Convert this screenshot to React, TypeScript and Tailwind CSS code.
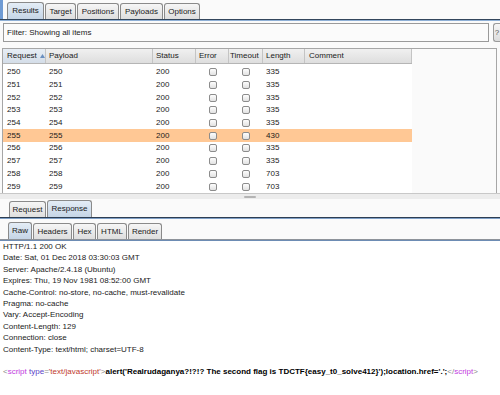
import React from "react";

const rows = [
  { id: 250, len: 335 },
  { id: 251, len: 335 },
  { id: 252, len: 335 },
  { id: 253, len: 335 },
  { id: 254, len: 335 },
  { id: 255, len: 430, hit: true },
  { id: 256, len: 335 },
  { id: 257, len: 335 },
  { id: 258, len: 703 },
  { id: 259, len: 703 },
];

const headers = [
  "HTTP/1.1 200 OK",
  "Date: Sat, 01 Dec 2018 03:30:03 GMT",
  "Server: Apache/2.4.18 (Ubuntu)",
  "Expires: Thu, 19 Nov 1981 08:52:00 GMT",
  "Cache-Control: no-store, no-cache, must-revalidate",
  "Pragma: no-cache",
  "Vary: Accept-Encoding",
  "Content-Length: 129",
  "Connection: close",
  "Content-Type: text/html; charset=UTF-8",
];

function Tab({ label, w, active }: { label: string; w: string; active?: boolean }) {
  return (
    <div
      className={`${w} flex items-center justify-center rounded-t-[3px] border border-b-0 border-[#8a8a8a] text-[8px] text-[#1a1a1a] ${
        active
          ? "h-[17px] bg-gradient-to-b from-[#e4edf6] to-[#c5d5e6]"
          : "h-[16px] bg-gradient-to-b from-[#f6f6f6] to-[#dedede]"
      }`}
    >
      {label}
    </div>
  );
}

function Check() {
  return (
    <div className="h-[8px] w-[8px] rounded-[2px] border border-[#8c8c8c] bg-gradient-to-b from-[#fdfdfd] to-[#e2e2e2]" />
  );
}

export default function App() {
  return (
    <div
      className="h-[395px] w-[500px] overflow-hidden bg-[#fafafa] text-[#1a1a1a]"
      style={{ fontFamily: '"Liberation Sans", Arial, sans-serif' }}
    >
      {/* top tab strip */}
      <div className="flex h-[19px] items-end">
        <div className="h-[19px] w-[3px] bg-[#6f9bd4]" />
        <div className="ml-[4px] flex items-end gap-[1px]">
          <Tab label="Results" w="w-[37px]" active />
          <Tab label="Target" w="w-[31px]" />
          <Tab label="Positions" w="w-[42px]" />
          <Tab label="Payloads" w="w-[43px]" />
          <Tab label="Options" w="w-[36px]" />
        </div>
      </div>
      <div className="h-[1px] bg-[#33465c]" />
      <div className="h-[1px] bg-[#8fb0d6]" />

      {/* filter */}
      <div className="mt-[2px] flex h-[19px] items-stretch">
        <div className="ml-[3px] flex w-[486px] items-center border border-[#9a9a9a] bg-[#fbfbfb] pl-[3px] text-[8px]">
          Filter: Showing all items
        </div>
        <div className="ml-[4px] flex flex-1 items-center justify-center rounded-l-[3px] border border-r-0 border-[#9a9a9a] bg-gradient-to-b from-[#f6f6f6] to-[#dcdcdc] text-[8px] text-[#555]">
          ?
        </div>
      </div>

      {/* results table */}
      <div className="ml-[2px] mt-[6px] h-[145px] w-[495px] border-x border-t border-[#a6a6a6] bg-[#fafafa]">
        <div className="w-[409px]">
          <div className="flex h-[15px] border-b border-[#b5b5b5] text-[8px] leading-[14px]">
            <div className="flex w-[43px] items-center gap-[3px] border-r border-[#c4c4c4] bg-gradient-to-b from-[#e8eef5] to-[#d4dde8] pl-[4px]">
              Request
              <svg width="5" height="4" viewBox="0 0 5 4">
                <path d="M2.5 0L5 4H0z" fill="#6a8fbf" />
              </svg>
            </div>
            <div className="w-[107px] border-r border-[#c4c4c4] bg-gradient-to-b from-[#f0f0f0] to-[#dedede] pl-[3px]">
              Payload
            </div>
            <div className="w-[43px] border-r border-[#c4c4c4] bg-gradient-to-b from-[#f0f0f0] to-[#dedede] pl-[3px]">
              Status
            </div>
            <div className="w-[33px] border-r border-[#c4c4c4] bg-gradient-to-b from-[#f0f0f0] to-[#dedede] pl-[3px]">
              Error
            </div>
            <div className="w-[34px] border-r border-[#c4c4c4] bg-gradient-to-b from-[#f0f0f0] to-[#dedede] pl-[1px]">
              Timeout
            </div>
            <div className="w-[42px] border-r border-[#c4c4c4] bg-gradient-to-b from-[#f0f0f0] to-[#dedede] pl-[3px]">
              Length
            </div>
            <div className="w-[107px] border-r border-[#c4c4c4] bg-gradient-to-b from-[#f0f0f0] to-[#dedede] pl-[4px]">
              Comment
            </div>
          </div>
          <div className="bg-white pt-[2px]">
            {rows.map((r) => (
              <div
                key={r.id}
                className={`flex h-[12.7px] items-center text-[8px] ${r.hit ? "bg-[#ffc895]" : ""}`}
              >
                <div className="w-[43px] pl-[4px]">{r.id}</div>
                <div className="w-[107px] pl-[3px]">{r.id}</div>
                <div className="w-[43px] pl-[3px]">200</div>
                <div className="flex w-[33px] justify-center">
                  <Check />
                </div>
                <div className="flex w-[34px] justify-center">
                  <Check />
                </div>
                <div className="w-[42px] pl-[3px]">{r.len}</div>
                <div className="w-[107px]" />
              </div>
            ))}
          </div>
        </div>
      </div>

      {/* split divider */}
      <div className="flex h-[6px] items-center justify-center border-t border-[#c8c8c8] bg-[#ececec]">
        <div className="h-[2px] w-[12px] rounded-full bg-[#b4b4b4]" />
      </div>

      {/* request / response tabs */}
      <div className="mt-[1px] flex items-end gap-[1px] pl-[9px]">
        <Tab label="Request" w="w-[37px]" />
        <Tab label="Response" w="w-[45px]" active />
      </div>
      <div className="h-[1px] bg-[#2d3e52]" />
      <div className="h-[1px] bg-[#7f9fc6]" />

      <div className="mt-[3px] flex items-end gap-[1px] pl-[8px]">
        <Tab label="Raw" w="w-[24px]" active />
        <Tab label="Headers" w="w-[39px]" />
        <Tab label="Hex" w="w-[23px]" />
        <Tab label="HTML" w="w-[30px]" />
        <Tab label="Render" w="w-[34px]" />
      </div>
      <div className="h-[1px] bg-[#8e939a]" />
      <div className="h-[1px] bg-[#6d8cb4]" />

      {/* response body */}
      <div className="h-full bg-white pl-[3px] text-[8px] leading-[11.4px]">
        {headers.map((h) => (
          <div key={h}>{h}</div>
        ))}
        <div className="h-[11.4px]" />
        <div className="whitespace-nowrap">
          <span className="text-[#8a8a8a]">&lt;</span>
          <span className="text-[#c23be0]">script</span>{" "}
          <span className="text-[#5a3fc8]">type</span>
          <span className="text-[#8a8a8a]">=</span>
          <span className="text-[#c0392b]">'text/javascript'</span>
          <span className="text-[#8a8a8a]">&gt;</span>
          <span className="font-bold text-black">
            alert('Realrudaganya?!?!? The second flag is TDCTF{"{"}easy_t0_solve412{"}"}');location.href='.';
          </span>
          <span className="text-[#8a8a8a]">&lt;/</span>
          <span className="text-[#c23be0]">script</span>
          <span className="text-[#8a8a8a]">&gt;</span>
        </div>
      </div>
    </div>
  );
}
